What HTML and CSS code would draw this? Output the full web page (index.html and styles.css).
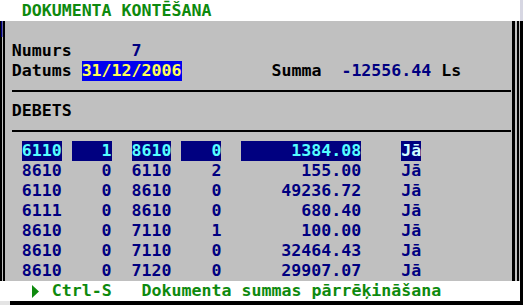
FILE: index.html
```html
<!DOCTYPE html>
<html lang="lv">
<head>
    <meta charset="UTF-8">
    <meta name="viewport" content="width=device-width, initial-scale=1.0">
    <title>Dokumenta kontēšana</title>
    <link rel="stylesheet" href="styles.css">
</head>
<body>
    <div class="screen">
        <div class="title-bar">DOKUMENTA KONTĒŠANA</div>

        <div class="window">
            <div class="line"></div>
            <div class="line">Numurs      <span class="value">7</span></div>
            <div class="line">Datums <span class="date">31/12/2006</span>         Summa  <span class="value">-12556.44</span> Ls</div>
            <div class="rule"></div>
            <div class="line">DEBETS</div>
            <div class="rule"></div>

            <!-- kontējuma rindas -->
            <div class="entries">
                <div class="entry selected">
                    <span class="acct">6110</span><span class="sub">1</span>
                    <span class="acct">8610</span><span class="sub">0</span>
                    <span class="amount">1384.08</span><span class="flag">Jā</span>
                </div>
                <div class="entry">
                    <span class="acct">8610</span><span class="sub">0</span>
                    <span class="acct">6110</span><span class="sub">2</span>
                    <span class="amount">155.00</span><span class="flag">Jā</span>
                </div>
                <div class="entry">
                    <span class="acct">6110</span><span class="sub">0</span>
                    <span class="acct">8610</span><span class="sub">0</span>
                    <span class="amount">49236.72</span><span class="flag">Jā</span>
                </div>
                <div class="entry">
                    <span class="acct">6111</span><span class="sub">0</span>
                    <span class="acct">8610</span><span class="sub">0</span>
                    <span class="amount">680.40</span><span class="flag">Jā</span>
                </div>
                <div class="entry">
                    <span class="acct">8610</span><span class="sub">0</span>
                    <span class="acct">7110</span><span class="sub">1</span>
                    <span class="amount">100.00</span><span class="flag">Jā</span>
                </div>
                <div class="entry">
                    <span class="acct">8610</span><span class="sub">0</span>
                    <span class="acct">7110</span><span class="sub">0</span>
                    <span class="amount">32464.43</span><span class="flag">Jā</span>
                </div>
                <div class="entry">
                    <span class="acct">8610</span><span class="sub">0</span>
                    <span class="acct">7120</span><span class="sub">0</span>
                    <span class="amount">29907.07</span><span class="flag">Jā</span>
                </div>
            </div>
        </div>

        <div class="status-bar">
            <svg class="arrow" width="7" height="13" viewBox="0 0 7 13"><path d="M0 0 L7 6.5 L0 13 Z" fill="#0e8a0e"/></svg>
            <span class="key">Ctrl-S</span>
            <span class="hint">Dokumenta summas pārrēķināšana</span>
        </div>
        <div class="shadow"></div>
    </div>
</body>
</html>
```

FILE: styles.css
```css
body {
    margin: 0;
    background-color: #000;
}
.screen {
    width: 523px;
    font-family: "DejaVu Sans Mono", monospace;
    font-weight: bold;
    font-size: 16.6px;
    line-height: 20px;
}
.title-bar {
    height: 21px;
    line-height: 21px;
    padding-left: 21.7px;
    background-color: #fff;
    color: #0e8a0e;
    border-right: 3px solid #d6d6e2;
}
.window {
    width: 520px;
    box-sizing: border-box;
    padding-left: 11.7px;
    color: #000;
    background:
        linear-gradient(#000080, #000080) 1px 0 / 1.5px 16px no-repeat,
        linear-gradient(to right,
        #c0c0c0 0 0.5px, #000 0.5px 2.5px, #c0c0c0 2.5px 3.5px, #000 3.5px 5.5px,
        #c0c0c0 5.5px 512px, #000 512px 515px, #c0c0c0 515px 517px,
        #000 517px 519px, #c0c0c0 519px);
}
.line {
    height: 20px;
    white-space: pre;
}
.value {
    color: #000080;
}
.date {
    display: inline-block;
    height: 20px;
    vertical-align: top;
    background-color: #0000f0;
    color: #ffff55;
}
.rule {
    height: 20px;
    display: flex;
    align-items: center;
}
.rule::before {
    content: "";
    width: 50ch;
    height: 2px;
    margin-top: -1px;
    background-color: #000;
}
.entries {
    padding-left: 1ch;
    color: #000080;
}
.entry {
    display: flex;
    height: 20px;
}
.entry span {
    white-space: pre;
}
.acct {
    width: 4ch;
}
.sub {
    width: 4ch;
    margin: 0 2ch 0 1ch;
    text-align: right;
}
.amount {
    width: 12ch;
    margin-right: 4ch;
    text-align: right;
}
.flag {
    width: 2ch;
}
.entry.selected span {
    background-color: #000080;
    color: #55ffff;
}
.entry.selected .flag {
    color: #d0ffff;
}
.status-bar {
    width: 520px;
    height: 20px;
    box-sizing: border-box;
    display: flex;
    align-items: center;
    padding-left: 11.7px;
    background-color: #fff;
    color: #0e8a0e;
    white-space: pre;
}
.arrow {
    margin-left: 20px;
    margin-right: 13px;
}
.key {
    width: 6ch;
    margin-right: 3ch;
}
.shadow {
    width: 10px;
    height: 4px;
    background-color: #e4e4e4;
}
```
